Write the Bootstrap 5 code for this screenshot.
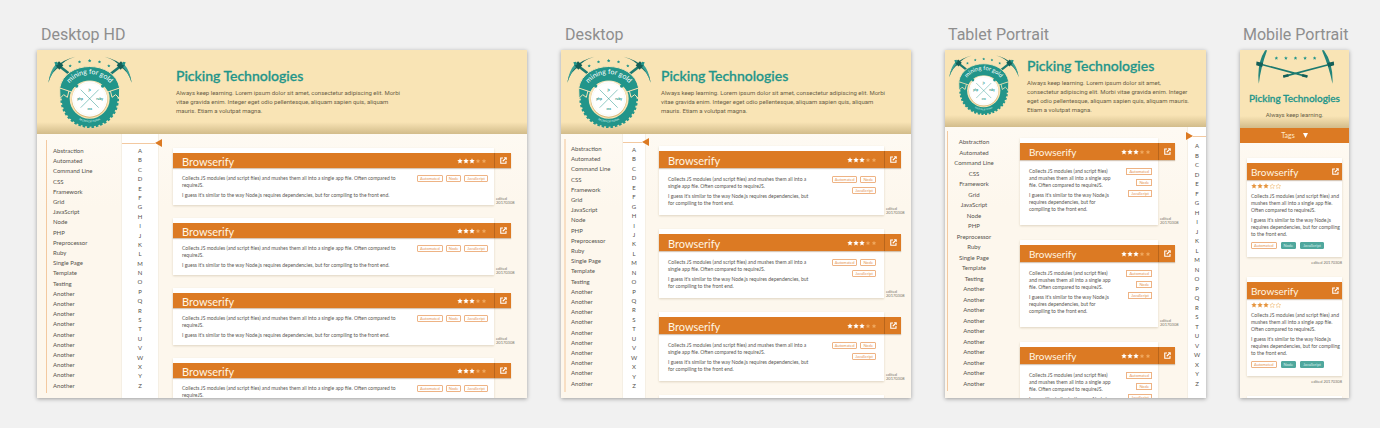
<!DOCTYPE html>
<html lang="en">
<head>
<meta charset="utf-8">
<meta name="viewport" content="width=device-width, initial-scale=1">
<title>Picking Technologies</title>
<link href="https://cdn.jsdelivr.net/npm/bootstrap@5.3.0/dist/css/bootstrap.min.css" rel="stylesheet">
<style>
:root { --teal: #22958a; --orange: #dc7a23; --sand: #f9e4b5; --ink: #5c5850; }
body { background: #f1f1f1; font-family: Lato, "Open Sans", sans-serif; color: var(--ink); }
.boards { display: grid; grid-template-columns: 490fr 350fr 261fr 109fr; column-gap: 34px; height: 100vh; padding: 24px 31px 30px 37px; }
.board { min-width: 0; min-height: 0; }
.board-name { font: 400 16px/22px Roboto, sans-serif; color: #8e8e8e; padding-left: 4px; margin-bottom: 4px; white-space: nowrap; }
.frame { background: linear-gradient(#fffdf9, #fdf7ed 45%); box-shadow: 0 1px 4px rgba(0,0,0,.35); min-height: 0; }
.content { min-height: 0; }

/* masthead */
.masthead { background: linear-gradient(transparent calc(100% - 12px), rgba(120,95,40,.3)), var(--sand); padding: 6px 6px 6px 11px; gap: 44px; }
.logo { width: 84px; height: 72px; }
.masthead-text { padding-top: 11px; }
.masthead h1 { font-size: 14px; line-height: 18px; color: var(--teal); font-weight: 500; -webkit-text-stroke: .3px var(--teal); margin: 0 0 3px; white-space: nowrap; }
.intro { font: 6px/9px Roboto, sans-serif; color: #6b5f47; white-space: nowrap; }

/* tag list and alphabet */
.tag-nav { width: 84px; padding: 6px 0 5px 9px; }
.tag-nav ul { border-left: 1px solid #f3c9a0; padding: 6px 0 3px 6px; }
.tag-nav a, .letter-nav a { display: block; font-size: 6px; line-height: 9px; color: #55524c; text-decoration: none; }
.letter-nav { width: 38px; background: #fff; border: solid #f5efe4; border-width: 0 1px; }
.letter-nav ul { padding: 12px 0 8px; }
.marker { top: 5px; left: 0; right: -4px; height: 8px; z-index: 1; }
.marker::before { content: ""; flex: 1; height: 1px; background: #f3c9a0; }
.marker::after { content: ""; border: solid transparent; border-width: 4px 0; border-right: 7px solid var(--orange); }

/* technology entries */
.entries { padding: 14px 16px 0 14px; gap: 13px; min-height: 0; overflow: hidden; }
.entries article, .peek { flex: none; }
.sheet { background: #fff; box-shadow: 0 1px 2px rgba(120,90,40,.22); padding-top: 5px; min-width: 0; }
.bar { background: var(--orange); height: 15px; margin-right: -17px; padding-left: 9px; color: #fff; box-shadow: 0 1px 1px rgba(120,70,20,.3); }
.bar h2 { font-size: 11px; line-height: 15px; font-weight: 400; margin: 0; color: #fff6e4; padding-top: 2px; }
.rating { width: 30px; height: 6px; margin-right: 7px; }
.open-link { width: 17px; color: #fff; border-left: 1px solid #b9651b; }
.open-link svg { width: 7px; height: 7px; }
.about { padding: 7px 6px 6px 9px; gap: 6px; }
.about p { font-size: 5px; line-height: 7px; margin: 0; color: #5a5752; white-space: nowrap; }
.about p + p { margin-top: 3px; }
.chips { gap: 3px; }
.chip { font-size: 4px; line-height: 5px; border: 1px solid #eeb384; border-radius: 1px; color: #e59555; background: #fff; padding: 0 2px; height: 7px; text-decoration: none; }
.edited { width: 17px; font-size: 4px; line-height: 4px; color: #77736b; padding-left: 2px; flex: none; }

/* desktop */
.desktop .masthead { padding: 6px; gap: 10px; }
.desktop .tag-nav { width: 61px; padding: 5px 0 6px 3px; }
.desktop .tag-nav ul { border-left: 2px solid #f8dfc4; padding: 5px 0 4px 5px; }
.desktop .letter-nav { width: 24px; }
.desktop .marker { top: 4px; }
.desktop .letter-nav ul { padding: 11px 0 8px; }
.desktop .entries { padding: 12px 10px 0 13px; gap: 14px; }
.desktop .bar, .tablet .bar, .mobile .bar { height: 17px; }
.desktop .about { padding: 8px 8px 8px 9px; }
.desktop .chips { width: 45px; row-gap: 4px; }

/* tablet */
.tablet .masthead { padding: 5px 4px 12px; gap: 8px; }
.tablet .logo { width: 70px; height: 60px; }
.tablet .masthead-text { padding-top: 2px; }
.tablet .tag-nav { width: 60px; padding: 4px 0 7px 2px; text-align: center; }
.tablet .tag-nav ul { padding: 6px 5px 3px 0; }
.tablet .letter-nav { width: 19px; border-right: 0; }
.tablet .letter-nav ul { padding: 14px 0 10px; }
.tablet .entries { padding: 11px 12px 0 15px; gap: 15px; }
.tablet .bar h2 { font-size: 10px; }
.tablet .about { padding: 8px 6px 12px 9px; }
.tablet .chips { gap: 4px; }
.tablet .chip { border-radius: 0; }
.tablet .marker { left: -2px; right: 0; top: 5px; flex-direction: row-reverse; }
.tablet .marker::after { border-right: 0; border-left: 7px solid var(--orange); }

/* mobile */
.mobile .board-name, .tablet .board-name { padding-left: 3px; }
.mobile .masthead { padding: 0 0 9px; }
.mobile .picks { width: 100%; height: 35px; }
.mobile h1 { font-size: 10px; line-height: 14px; margin: 6px 0 5px; }
.tags-btn { background: var(--orange); border: 0; color: #ffe9cc; font-size: 7px; line-height: 15px; height: 15px; gap: 8px; padding: 0; }
.mobile .entries { padding: 15px 7px 0 7px; gap: 12px; }
.mobile .bar { margin: 0; padding-left: 4px; }
.mobile .bar h2 { font-size: 10px; }
.mobile .open-link { width: 13px; border: 0; }
.mobile .about { padding: 3px 4px 8px; gap: 4px; }
.mobile .rating { margin: 0; }
.mobile .chips { gap: 4px; }
.mobile .chip.teal { background: #4fa79d; border-color: #4fa79d; color: #d9f0ec; }
.mobile .edited { width: auto; text-align: right; padding-top: 4px; }
</style>
</head>
<body>
<svg class="d-none">
  <symbol id="star" viewBox="0 0 12 12"><path d="M6 .6l1.6 3.6 3.9.4-2.9 2.6.8 3.8L6 9.1 2.600 11l.8-3.800L.5 4.600l3.900-.4z"/></symbol>
  <symbol id="rate" viewBox="0 0 60 12">
    <g fill="#fff"><use href="#star" width="12" height="12"/><use href="#star" x="12" width="12" height="12"/><use href="#star" x="24" width="12" height="12"/></g>
    <g fill="#f0a85e"><use href="#star" x="37" y="1" width="10" height="10"/><use href="#star" x="49" y="1" width="10" height="10"/></g>
  </symbol>
  <symbol id="rate-line" viewBox="0 0 60 12">
    <g fill="#e6953f"><use href="#star" width="12" height="12"/><use href="#star" x="12" width="12" height="12"/><use href="#star" x="24" width="12" height="12"/></g>
    <g fill="none" stroke="#f0b060" stroke-width="1"><use href="#star" x="37" y="1" width="11" height="11"/><use href="#star" x="49" y="1" width="11" height="11"/></g>
  </symbol>
  <symbol id="open" viewBox="0 0 14 14"><path d="M6 2H1.500v10.500H12V8M5.500 8.500L11 3" fill="none" stroke="currentColor" stroke-width="2.200"/><path d="M7.500.5h6v6z" fill="currentColor"/></symbol>
  <symbol id="pick" viewBox="0 0 90 90" overflow="visible">
    <path d="M26 24l54 42" stroke="#1c7a70" stroke-width="8"/>
    <path d="M1 80Q10 20 82 2Q44 14 35 33Q12 44 1 80z" fill="#1a6f66"/>
    <path d="M1 80Q6 44 24 24l6 6Q10 50 1 80z" fill="#3ba195"/>
    <path d="M22 28l11-12 13 12-12 13z" fill="#155f57"/><path d="M19 19l8-2 4 8-8 4z" fill="#22958a"/>
  </symbol>
  <symbol id="badge-logo" viewBox="0 0 252 216">
    <use href="#pick" width="90" height="90"/><use href="#pick" width="90" height="90" transform="translate(252) scale(-1 1)"/>
    <g fill="#22958a"><use href="#star" x="61" y="24" width="11" height="11"/><use href="#star" x="89" y="12" width="11" height="11"/><use href="#star" x="119" y="8" width="12" height="12"/><use href="#star" x="149" y="12" width="11" height="11"/><use href="#star" x="177" y="24" width="11" height="11"/></g>
    <circle cx="125" cy="128" r="84" fill="#22958a"/>
    <circle cx="125" cy="128" r="84" fill="none" stroke="#22958a" stroke-width="8" stroke-dasharray="7.500 5.700"/>
    <circle cx="125" cy="128" r="60" fill="#f9e4b5"/>
    <path d="M35 96L64 100 58 124 47 116 36 127zM215 96L186 100 192 124 203 116 214 127z" fill="#22958a" stroke="#f9e4b5" stroke-width="3"/>
    <path d="M35 96C50 10 200 10 215 96L179 108C160 64 90 64 71 108z" fill="#22958a" stroke="#f9e4b5" stroke-width="3"/>
    <circle cx="125" cy="131" r="54" fill="#d8b878"/><circle cx="125" cy="129" r="53" fill="#fff"/>
    <circle cx="125" cy="129" r="49" fill="none" stroke="#e9efe9"/>
    <path d="M98 101l54 54M152 101l-54 54" stroke="#22958a" stroke-width="1.500"/>
    <circle cx="86" cy="90" r="5" fill="#22958a"/><circle cx="164" cy="90" r="5" fill="#22958a"/>
    <path id="arc-top" d="M53 99A80 80 0 0 1 197 99" fill="none"/>
    <path id="arc-low" d="M66 168A72 72 0 0 0 184 168" fill="none"/>
    <g font-family="Lato, sans-serif" text-anchor="middle">
      <text font-size="21" fill="#fff"><textPath href="#arc-top" startOffset="50%">mining for gold</textPath></text>
      <text font-size="10" fill="#d5efe9"><textPath href="#arc-low" startOffset="50%">technical notes</textPath></text>
      <g font-size="10" font-weight="700" fill="#22958a"><text x="125" y="104">js</text><text x="96" y="131">php</text><text x="155" y="131">ruby</text><text x="125" y="162">css</text></g>
    </g>
  </symbol>
</svg>

<div class="boards">
  <section class="board hd d-flex flex-column">
    <div class="board-name">Desktop HD</div>
    <div class="frame flex-grow-1 d-flex flex-column overflow-hidden">
      <header class="masthead d-flex">
        <svg class="logo flex-shrink-0" role="img" aria-label="mining for gold"><use href="#badge-logo"/></svg>
        <div class="masthead-text"><h1>Picking Technologies</h1>
          <p class="intro mb-0">Always keep learning. Lorem ipsum dolor sit amet, consectetur adipiscing elit. Morbi<br>vitae gravida enim. Integer eget odio pellentesque, aliquam sapien quis, aliquam<br>mauris. Etiam a volutpat magna.</p></div>
      </header>
      <div class="content d-flex flex-grow-1">
        <nav class="tag-nav d-flex flex-shrink-0" aria-label="Tags"></nav>
        <nav class="letter-nav position-relative d-flex flex-shrink-0" aria-label="Letters"></nav>
        <main class="entries d-flex flex-column flex-grow-1" data-count="4" data-lines="Collects JS modules (and script files) and mushes them all into a single app file. Often compared to|requireJS.;I guess it's similar to the way Node.js requires dependencies, but for compiling to the front end."></main>
      </div>
    </div>
  </section>

  <section class="board desktop d-flex flex-column">
    <div class="board-name">Desktop</div>
    <div class="frame flex-grow-1 d-flex flex-column overflow-hidden">
      <header class="masthead d-flex">
        <svg class="logo flex-shrink-0" role="img" aria-label="mining for gold"><use href="#badge-logo"/></svg>
        <div class="masthead-text"><h1>Picking Technologies</h1>
          <p class="intro mb-0">Always keep learning. Lorem ipsum dolor sit amet, consectetur adipiscing elit. Morbi<br>vitae gravida enim. Integer eget odio pellentesque, aliquam sapien quis, aliquam<br>mauris. Etiam a volutpat magna.</p></div>
      </header>
      <div class="content d-flex flex-grow-1">
        <nav class="tag-nav d-flex flex-shrink-0" aria-label="Tags"></nav>
        <nav class="letter-nav position-relative d-flex flex-shrink-0" aria-label="Letters"></nav>
        <main class="entries d-flex flex-column flex-grow-1" data-count="3" data-peek="1" data-lines="Collects JS modules (and script files) and mushes them all into a|single app file. Often compared to requireJS.;I guess it's similar to the way Node.js requires dependencies, but|for compiling to the front end."></main>
      </div>
    </div>
  </section>

  <section class="board tablet d-flex flex-column">
    <div class="board-name">Tablet Portrait</div>
    <div class="frame flex-grow-1 d-flex flex-column overflow-hidden">
      <header class="masthead d-flex">
        <svg class="logo flex-shrink-0" role="img" aria-label="mining for gold"><use href="#badge-logo"/></svg>
        <div class="masthead-text"><h1>Picking Technologies</h1>
          <p class="intro mb-0">Always keep learning. Lorem ipsum dolor sit amet,<br>consectetur adipiscing elit. Morbi vitae gravida enim. Integer<br>eget odio pellentesque, aliquam sapien quis, aliquam mauris.<br>Etiam a volutpat magna.</p></div>
      </header>
      <div class="content d-flex flex-grow-1">
        <nav class="tag-nav d-flex flex-shrink-0" aria-label="Tags"></nav>
        <main class="entries d-flex flex-column flex-grow-1" data-count="3" data-stack="1" data-lines="Collects JS modules (and script files)|and mushes them all into a single app|file. Often compared to requireJS.;I guess it's similar to the way Node.js|requires dependencies, but for|compiling to the front end."></main>
        <nav class="letter-nav position-relative d-flex flex-shrink-0" aria-label="Letters"></nav>
      </div>
    </div>
  </section>

  <section class="board mobile d-flex flex-column">
    <div class="board-name">Mobile Portrait</div>
    <div class="frame flex-grow-1 d-flex flex-column overflow-hidden">
      <header class="masthead text-center">
        <svg class="picks d-block" viewBox="0 0 330 105" aria-hidden="true">
          <path d="M60 42L204 80M276 42L131 80" stroke="#1c7a70" stroke-width="5"/>
          <path d="M188 76l16 4M147 76l-16 4" stroke="#155f57" stroke-width="8"/>
          <path d="M76 0Q50 40 57 102Q62 55 82 0zM254 0Q283 40 280 102Q271 55 248 0z" fill="#22857b"/>
          <path d="M50 34l20 5-3 12-18-5zM284 34l-20 5 3 12 18-5z" fill="#155f57"/>
          <g fill="#22958a"><use href="#star" x="104" y="18" width="12" height="12"/><use href="#star" x="133" y="18" width="12" height="12"/><use href="#star" x="162" y="18" width="12" height="12"/><use href="#star" x="191" y="18" width="12" height="12"/><use href="#star" x="220" y="18" width="12" height="12"/></g>
        </svg>
        <h1>Picking Technologies</h1>
        <p class="intro mb-0">Always keep learning.</p>
      </header>
      <button type="button" class="tags-btn d-flex justify-content-center align-items-center flex-shrink-0"><span>Tags</span><svg width="5" height="5" viewBox="0 0 10 10" aria-hidden="true"><path d="M0 0h10L5 10z" fill="#fff"/></svg></button>
      <main class="entries d-flex flex-column" data-count="2" data-peek="1" data-mobile="1" data-lines="Collects JS modules (and script files) and|mushes them all into a single app file.|Often compared to requireJS.;I guess it's similar to the way Node.js|requires dependencies, but for compiling|to the front end."></main>
    </div>
  </section>
</div>

<script src="https://cdn.jsdelivr.net/npm/bootstrap@5.3.0/dist/js/bootstrap.bundle.min.js"></script>
<script>
const tags = ['Abstraction', 'Automated', 'Command Line', 'CSS', 'Framework', 'Grid', 'JavaScript', 'Node', 'PHP', 'Preprocessor', 'Ruby', 'Single Page', 'Template', 'Testing', ...Array(10).fill('Another')];
const list = items => `<ul class="list-unstyled mb-0 w-100 d-flex flex-column justify-content-between">${items.map(t => `<li><a href="#">${t}</a></li>`).join('')}</ul>`;
document.querySelectorAll('.tag-nav').forEach(n => n.innerHTML = list(tags));
document.querySelectorAll('.letter-nav').forEach(n => {
  n.classList.add('text-center');
  n.innerHTML = '<span class="marker position-absolute d-flex align-items-center"></span>' + list([...'ABCDEFGHIJKLMNOPQRSTUVWXYZ']);
});

const chip = (t, teal) => `<a href="#" class="chip${teal ? ' teal' : ''}">${t}</a>`;
const open = '<a href="#" class="open-link d-flex align-items-center justify-content-center align-self-stretch" aria-label="Open"><svg><use href="#open"/></svg></a>';
document.querySelectorAll('.entries').forEach(main => {
  const d = main.dataset;
  const text = d.lines.split(';').map(p => `<p>${p.replaceAll('|', '<br>')}</p>`).join('');
  const rating = id => `<svg class="rating flex-shrink-0" role="img" aria-label="3 of 5 stars"><use href="#${id}"/></svg>`;
  const wide = `<article class="d-flex align-items-end">
    <div class="sheet flex-grow-1">
      <div class="bar d-flex align-items-center"><h2 class="me-auto">Browserify</h2>${rating('rate')}${open}</div>
      <div class="about d-flex justify-content-between"><div>${text}</div>
        <div class="chips d-flex ${d.stack ? 'flex-column align-items-end' : 'flex-wrap justify-content-end align-content-start align-items-start'}">${chip('Automated')}${chip('Node')}${chip('JavaScript')}</div></div>
    </div><small class="edited">edited<br>20170308</small></article>`;
  const narrow = `<article>
    <div class="sheet">
      <div class="bar d-flex align-items-center"><h2 class="me-auto">Browserify</h2>${open}</div>
      <div class="about d-flex flex-column">${rating('rate-line')}<div>${text}</div><div class="chips d-flex">${chip('Automated')}${chip('Node', 1)}${chip('JavaScript', 1)}</div></div>
    </div><small class="edited d-block">edited 20170308</small></article>`;
  const peek = d.peek ? `<div class="peek d-flex"><div class="sheet flex-grow-1"></div>${d.mobile ? '' : '<span class="edited"></span>'}</div>` : '';
  main.innerHTML = (d.mobile ? narrow : wide).repeat(d.count) + peek;
});
</script>
</body>
</html>
